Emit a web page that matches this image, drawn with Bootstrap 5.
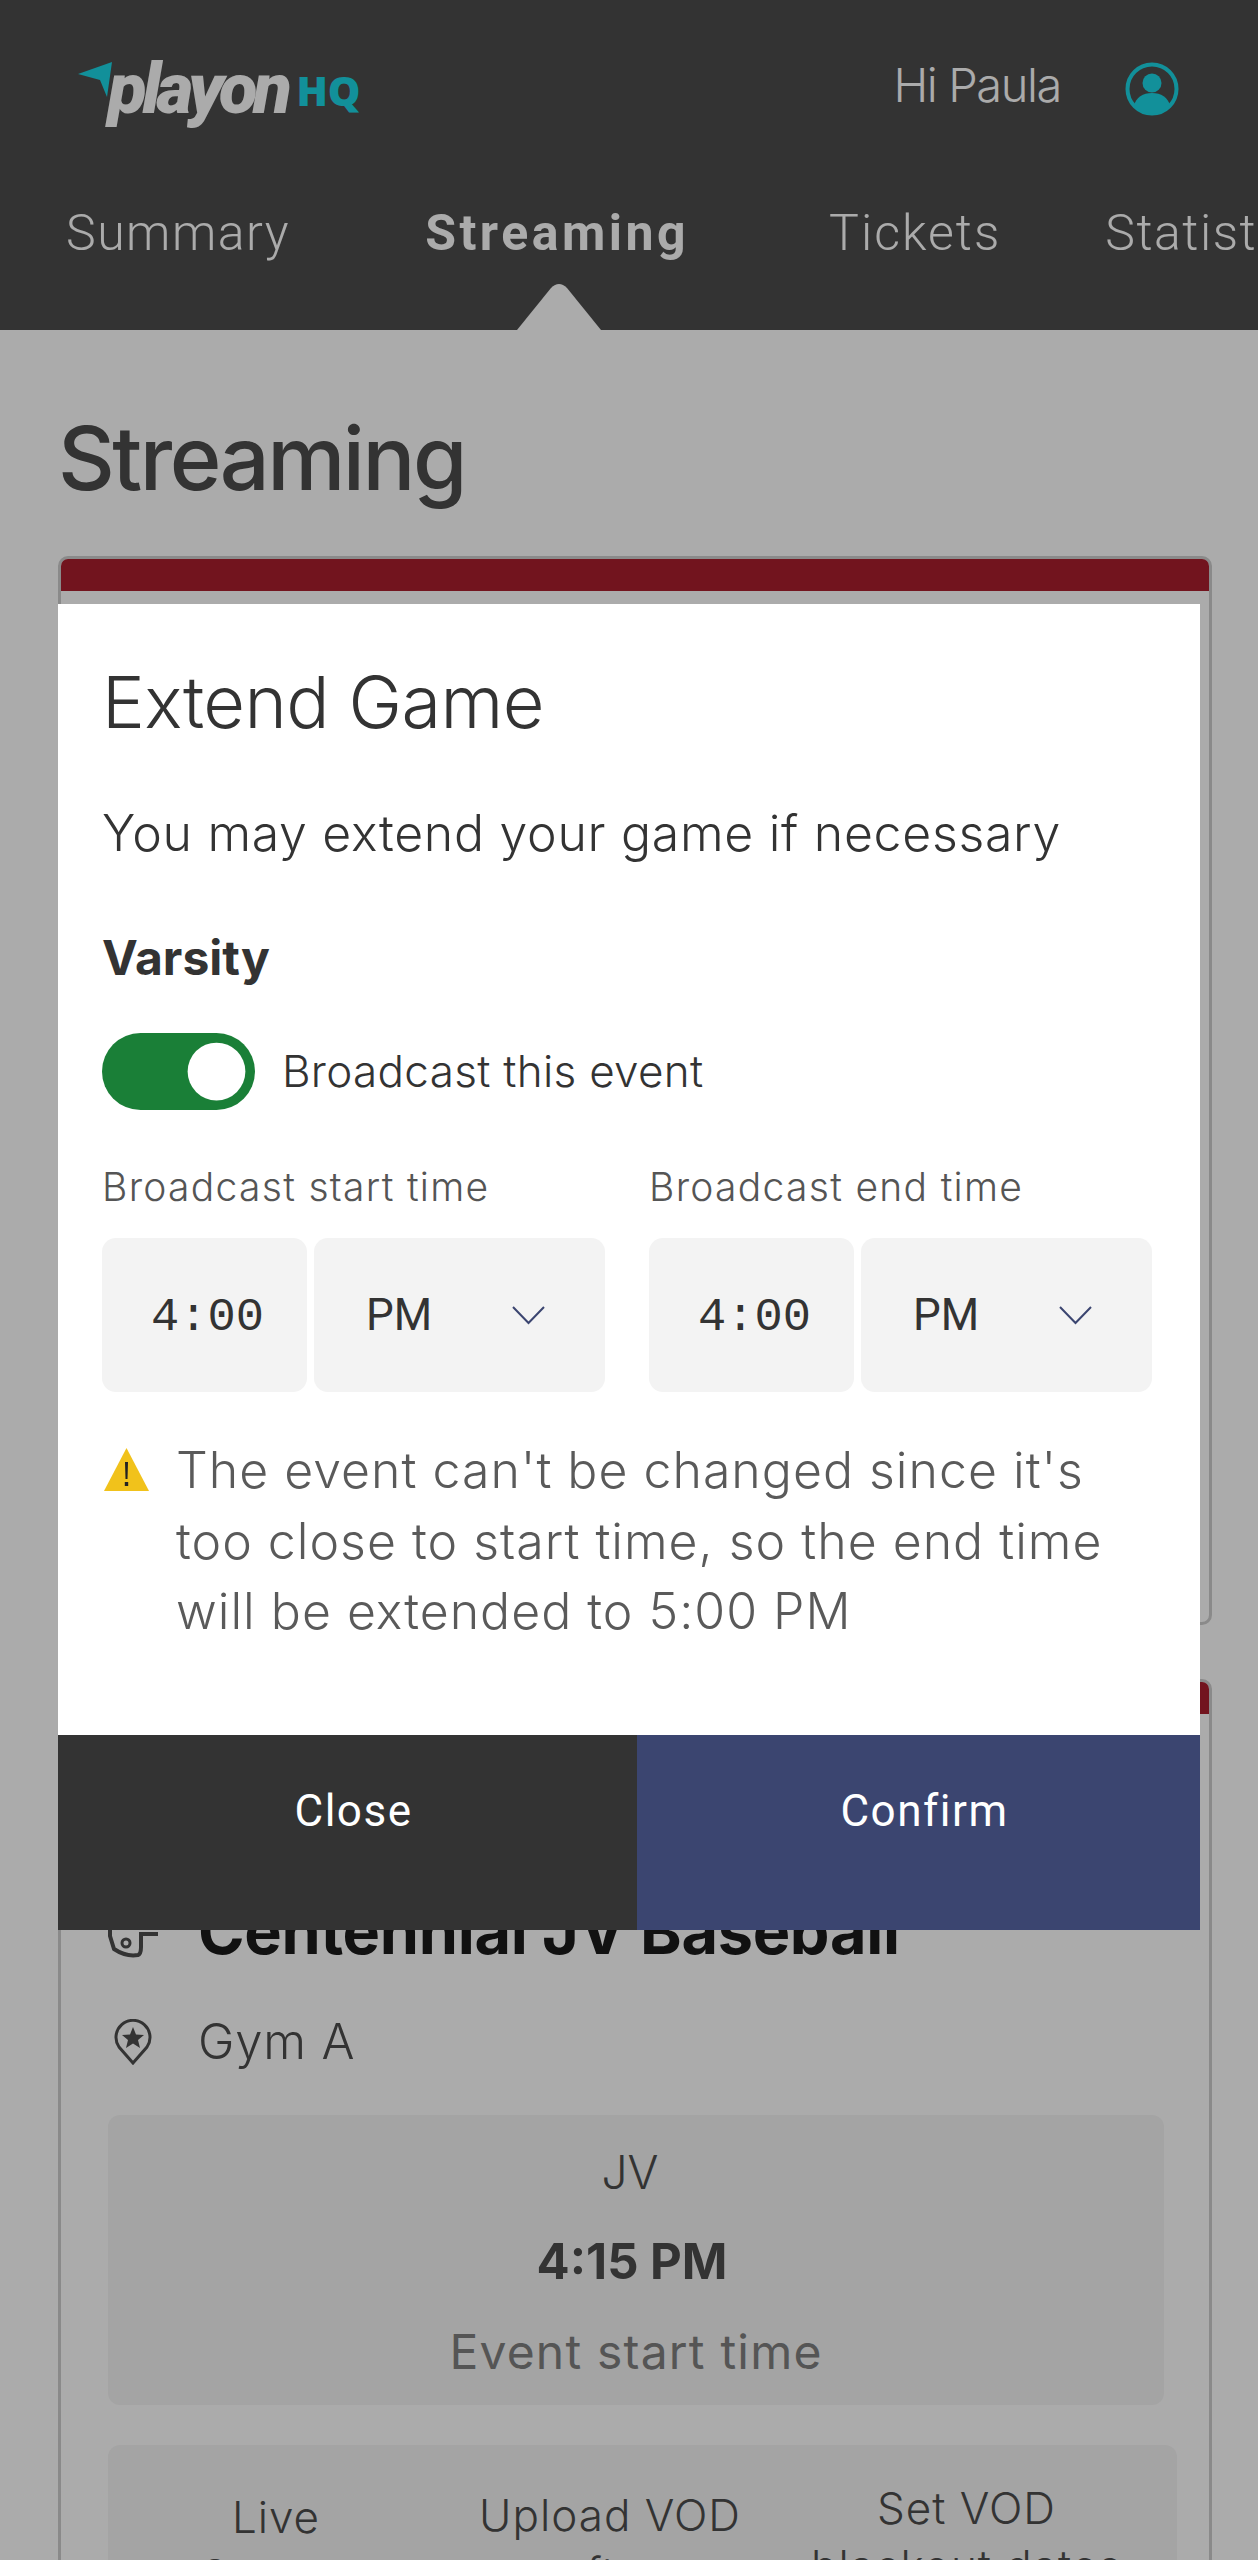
<!DOCTYPE html>
<html lang="en">
<head>
  <meta charset="UTF-8" />
  <title>Streaming — PlayOn HQ</title>
  <meta name="viewport" content="width=device-width, initial-scale=1" />
  <link href="https://cdn.jsdelivr.net/npm/bootstrap@5.3.0/dist/css/bootstrap.min.css" rel="stylesheet" />
  <style>
    html, body {
      height: 2560px;
      overflow: hidden;
    }
    body {
      background: #fff;
      font-family: Inter, "Liberation Sans", sans-serif;
      color: #4d4d4d;
    }
    .top-bar {
      background: #4d4d4d;
      height: 330px;
      position: relative;
      overflow: hidden;
    }
    .brand-row {
      height: 201px;
      padding: 62px 79px 0 78px;
    }
    .brand-mark {
      width: 36px;
      height: 38px;
      margin-right: -6px;
    }
    .brand-name {
      font-family: Roboto, sans-serif;
      font-weight: 900;
      font-style: italic;
      font-size: 71px;
      line-height: 62px;
      letter-spacing: -4.5px;
      color: #fff;
      margin-top: -4px;
    }
    .brand-hq {
      font-family: "Open Sans", sans-serif;
      font-weight: 800;
      font-size: 41px;
      line-height: 62px;
      margin: -3px 0 0 9px;
      color: #1bd7e6;
    }
    .hello {
      font-family: Inter, sans-serif;
      font-weight: 300;
      font-size: 47px;
      letter-spacing: -1.4px;
      color: #fff;
      margin: -1px 64px 0 0;
      line-height: 48px;
    }
    .avatar {
      width: 54px;
      height: 54px;
    }
    .tab-row {
      padding-left: 66px;
      white-space: nowrap;
    }
    .tab-link {
      font-family: Roboto, sans-serif;
      font-size: 50px;
      line-height: 64px;
      color: #fff;
      letter-spacing: 1.5px;
      font-weight: 300;
      margin-right: 135px;
    }
    .tab-link.on {
      font-weight: 700;
      letter-spacing: 3.5px;
      margin-right: 140px;
    }
    .tab-link.mid {
      letter-spacing: 2px;
      margin-right: 104px;
    }
    .tab-arrow {
      position: absolute;
      left: 517px;
      top: 284px;
      width: 84px;
      height: 46px;
    }
    .page-main {
      padding: 0 46px 0 58px;
    }
    .page-title {
      font-family: Inter, sans-serif;
      font-weight: 500;
      font-size: 88px;
      line-height: 96px;
      letter-spacing: -2.5px;
      margin: 80px 0 50px;
      color: #4d4d4d;
    }
    .game-card {
      border: 3px solid #cecece;
      border-radius: 10px;
      overflow: hidden;
      background: #fff;
    }
    .game-card.one {
      height: 1069px;
      margin-bottom: 54px;
    }
    .game-card.two {
      height: 1000px;
    }
    .game-band {
      height: 32px;
      background: #ab1e2d;
    }
    .game-body {
      padding: 182px 32px 0 47px;
    }
    .game-name {
      font-size: 63px;
      line-height: 70px;
      font-weight: 700;
      color: #1a1a1a;
      margin: 0;
      font-family: Inter, sans-serif;
      letter-spacing: -.3px;
    }
    .line-icon {
      width: 50px;
      flex: none;
      margin-right: 40px;
    }
    .gym-row {
      font-size: 49px;
      line-height: 60px;
      margin-top: 46px;
      letter-spacing: .8px;
      font-weight: 300;
    }
    .info-panel {
      background: #f5f5f5;
      border-radius: 12px;
      margin: 43px 13px 0 0;
      height: 290px;
      padding-top: 29px;
      font-size: 46px;
      line-height: 56px;
      font-weight: 300;
    }
    .panel-grade {
      padding-right: 12px;
    }
    .info-panel .when {
      font-weight: 700;
      margin: 34px 0;
      font-size: 49px;
      padding-right: 8px;
    }
    .info-panel .hint {
      color: #7f7f7f;
      font-size: 48px;
      letter-spacing: 1.2px;
      font-weight: 400;
    }
    .action-panel {
      background: #f5f5f5;
      border-radius: 12px;
      margin-top: 40px;
      padding-top: 34px;
      font-size: 44px;
      line-height: 58px;
      display: grid;
      grid-template-columns: 336px 332px 381px;
      letter-spacing: 1px;
      font-weight: 300;
    }
    .action-a { padding-top: 9px; }
    .action-b { padding-top: 7px; }
    .modal.dim {
      background: rgba(0, 0, 0, .33);
      overflow: hidden;
    }
    .modal-dialog.extend-box {
      max-width: 1142px;
      margin: 604px 0 0 58px;
    }
    .extend-box .modal-content {
      border: 0;
      border-radius: 0;
      color: #333;
    }
    .extend-box .modal-body {
      padding: 53px 48px 88px 44px;
    }
    .extend-title {
      font-family: Inter, sans-serif;
      font-weight: 300;
      font-size: 72px;
      line-height: 90px;
      letter-spacing: -.6px;
      margin: 0 0 51px;
      color: #333;
    }
    .extend-lead {
      font-size: 50px;
      line-height: 70px;
      margin: 0 0 60px;
      letter-spacing: .7px;
      font-weight: 300;
    }
    .team-name {
      font-size: 48px;
      line-height: 60px;
      font-weight: 700;
      margin-bottom: 45px;
    }
    .form-check-input.big-switch {
      width: 153px;
      height: 77px;
      margin: 0 27px 0 0;
      float: none;
      background-color: #1a7f37;
      border: 0;
      border-radius: 40px;
    }
    .switch-label {
      font-size: 44px;
      line-height: 77px;
      letter-spacing: .3px;
      font-weight: 300;
    }
    .time-field {
      width: 503px;
    }
    .time-label {
      font-size: 39px;
      line-height: 50px;
      margin: 52px 0 26px;
      color: #555;
      letter-spacing: 1.3px;
      font-weight: 300;
    }
    .time-value, .time-part {
      height: 154px;
      background-color: #f3f3f3;
      border: 0;
      border-radius: 14px;
      color: #333;
    }
    .time-value {
      width: 205px;
      padding: 0 0 0 6px;
      font-family: "Liberation Mono", monospace;
      font-size: 47px;
      line-height: 160px;
      text-align: center;
      margin-right: 7px;
    }
    .time-part {
      flex: 1;
      font-size: 44px;
      padding: 0 0 0 52px;
      font-family: Roboto, sans-serif;
      font-weight: 400;
      background-image: url("data:image/svg+xml,%3csvg xmlns='http://www.w3.org/2000/svg' viewBox='0 0 33 19'%3e%3cpath fill='none' stroke='%233b4570' stroke-width='2' d='M1 1l15.500 16L32 1'/%3e%3c/svg%3e");
      background-position: right 60px center;
      background-size: 33px 19px;
    }
    .warn-row {
      margin-top: 43px;
      font-size: 50px;
      line-height: 70.5px;
      color: #5a5a5a;
      letter-spacing: 1px;
      font-weight: 300;
    }
    .warn-icon {
      width: 47px;
      height: 45px;
      flex: none;
      margin: 12px 26px 0 1px;
    }
    .extend-box .modal-footer {
      padding: 0;
      border: 0;
      flex-wrap: nowrap;
    }
    .extend-btn {
      margin: 0 !important;
      height: 195px;
      border: 0;
      border-radius: 0;
      color: #fff;
      font-family: Roboto, sans-serif;
      font-size: 44px;
      letter-spacing: 1.5px;
      padding: 0 0 42px 12px;
    }
    .extend-btn.back {
      width: 579px;
      background: #333;
    }
    .extend-btn.go {
      flex: 1;
      background: #3b4570;
    }
  </style>
</head>
<body>

  <header class="top-bar">
    <div class="brand-row d-flex justify-content-between">
      <div class="d-flex align-items-start">
        <svg class="brand-mark" viewBox="0 0 36 38"><path fill="#1bd7e6" d="M0 12L34 0l-5 35-7-17z"/></svg>
        <span class="brand-name">playon</span>
        <span class="brand-hq">HQ</span>
      </div>
      <div class="d-flex align-items-start">
        <span class="hello">Hi Paula</span>
        <svg class="avatar" viewBox="0 0 54 54">
          <circle cx="27" cy="27" r="24.500" fill="none" stroke="#1bd7e6" stroke-width="4"/>
          <circle cx="27" cy="21" r="9.500" fill="#1bd7e6"/>
          <path fill="#1bd7e6" d="M9 44c2-9 9-13 18-13s16 4 18 13c-5 5-11 8-18 8s-13-3-18-8z"/>
        </svg>
      </div>
    </div>
    <nav class="tab-row d-flex">
      <a class="tab-link text-decoration-none">Summary</a>
      <a class="tab-link on text-decoration-none">Streaming</a>
      <a class="tab-link mid text-decoration-none">Tickets</a>
      <a class="tab-link text-decoration-none">Statistics</a>
    </nav>
    <svg class="tab-arrow" viewBox="0 0 84 46"><path fill="#fff" d="M0 46L34 4q8-8 16 0l34 42z"/></svg>
  </header>

  <main class="page-main">
    <h1 class="page-title">Streaming</h1>

    <div class="game-card one">
      <div class="game-band"></div>
    </div>

    <div class="game-card two">
      <div class="game-band"></div>
      <div class="game-body">
        <div class="d-flex align-items-center">
          <svg class="line-icon" viewBox="0 0 50 70">
            <path fill="none" stroke="#4d4d4d" stroke-width="4" d="M2 10v30l4 13q12 8 24 6 3-1 3-8V38h17"/>
            <circle cx="18" cy="47" r="4" fill="none" stroke="#4d4d4d" stroke-width="3"/>
          </svg>
          <h2 class="game-name">Centennial JV Baseball</h2>
        </div>
        <div class="gym-row d-flex align-items-center">
          <svg class="line-icon" viewBox="0 0 50 46">
            <path fill="none" stroke="#4d4d4d" stroke-width="3" d="M25 44L11 28a17 17 0 1 1 28 0z"/>
            <path fill="#4d4d4d" d="M25 8l3 7.500 8 .5-6 5 2 8-7-4.500-7 4.500 2-8-6-5 8-.5z"/>
          </svg>
          <span>Gym A</span>
        </div>
        <div class="info-panel text-center">
          <div class="panel-grade">JV</div>
          <div class="when">4:15 PM</div>
          <div class="hint">Event start time</div>
        </div>
        <div class="action-panel text-center">
          <div class="action-a">Live<br />Stream</div>
          <div class="action-b">Upload VOD<br />after</div>
          <div>Set VOD<br />blackout dates</div>
        </div>
      </div>
    </div>
  </main>

  <div class="modal dim d-block" tabindex="-1">
    <div class="modal-dialog extend-box">
      <div class="modal-content">
        <div class="modal-body">
          <h2 class="extend-title">Extend Game</h2>
          <p class="extend-lead">You may extend your game if necessary</p>
          <div class="team-name">Varsity</div>
          <div class="form-check form-switch d-flex align-items-center p-0 m-0">
            <input class="form-check-input big-switch" type="checkbox" role="switch" checked />
            <span class="switch-label">Broadcast this event</span>
          </div>
          <div class="d-flex justify-content-between">
            <div class="time-field">
              <div class="time-label">Broadcast start time</div>
              <div class="d-flex">
                <div class="form-control time-value">4:00</div>
                <select class="form-select time-part"><option>AM</option><option selected>PM</option></select>
              </div>
            </div>
            <div class="time-field">
              <div class="time-label">Broadcast end time</div>
              <div class="d-flex">
                <div class="form-control time-value">4:00</div>
                <select class="form-select time-part"><option>AM</option><option selected>PM</option></select>
              </div>
            </div>
          </div>
          <div class="warn-row d-flex">
            <svg class="warn-icon" viewBox="0 0 47 45">
              <path fill="#f1c21b" d="M23.500 1L46 44H1z"/>
              <path fill="#222" d="M22 15h3l-.5 17h-2zM21.800 35h3.400v4h-3.400z"/>
            </svg>
            <div>The event can't be changed since it's<br />too close to start time, so the end time<br />will be extended to 5:00 PM</div>
          </div>
        </div>
        <div class="modal-footer">
          <button type="button" class="btn extend-btn back">Close</button>
          <button type="button" class="btn extend-btn go">Confirm</button>
        </div>
      </div>
    </div>
  </div>

  <script src="https://cdn.jsdelivr.net/npm/bootstrap@5.3.0/dist/js/bootstrap.bundle.min.js"></script>
</body>
</html>
